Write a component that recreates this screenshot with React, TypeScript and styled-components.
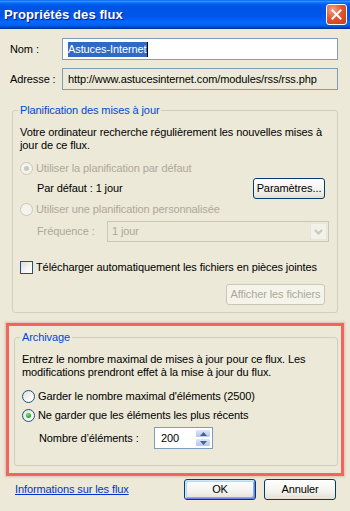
import React from 'react';
import styled, { createGlobalStyle } from 'styled-components';

const Global = createGlobalStyle`
  html, body {
    margin: 0;
    padding: 0;
    background: #ece9d8;
  }
  body {
    font-family: "Liberation Sans", Arial, sans-serif;
    font-size: 11px;
    line-height: 13px;
    letter-spacing: -0.1px;
    color: #000;
  }
`;

const Window = styled.div`
  width: 350px;
  height: 511px;
  display: flex;
  flex-direction: column;
  background: #ece9d8;
  overflow: hidden;
`;

const TitleBar = styled.div`
  height: 29px;
  flex: none;
  box-sizing: border-box;
  display: flex;
  align-items: center;
  justify-content: space-between;
  padding: 0 3px 1px 4px;
  background: linear-gradient(
    to bottom,
    #0058ee 0%,
    #3593ff 4%,
    #288eff 6%,
    #127dff 8%,
    #036ffc 10%,
    #0262ee 14%,
    #0057e5 20%,
    #0054e3 24%,
    #0055eb 56%,
    #005bf5 66%,
    #026afe 76%,
    #0062ef 86%,
    #0052d6 92%,
    #0040ab 96%,
    #003092 100%
  );
`;

const Title = styled.span`
  color: #fff;
  font-family: "Liberation Sans", Arial, sans-serif;
  font-weight: bold;
  font-size: 13px;
  letter-spacing: 0.1px;
  text-shadow: 1px 1px 0 #0a1e80;
`;

const CloseButton = styled.div`
  width: 21px;
  height: 21px;
  box-sizing: border-box;
  border: 1px solid #fff;
  border-radius: 3px;
  background: radial-gradient(circle at 30% 25%, #f4a38a 0%, #e2572f 45%, #c8391a 100%);
  display: flex;
  align-items: center;
  justify-content: center;
`;

const Content = styled.div`
  display: flex;
  flex-direction: column;
  padding: 9px 12px 0 10px;
`;

const FieldRow = styled.div<{ $top?: number }>`
  display: flex;
  align-items: center;
  height: 22px;
  margin-top: ${p => p.$top ?? 0}px;
`;

const FieldLabel = styled.div`
  width: 52px;
  flex: none;
`;

const TextBox = styled.div<{ $readOnly?: boolean }>`
  width: 276px;
  height: 22px;
  box-sizing: border-box;
  border: 1px solid #7f9db9;
  background: ${p => (p.$readOnly ? '#ece9d8' : '#fff')};
  display: flex;
  align-items: center;
  padding: 0 5px;
  white-space: nowrap;
`;

const Selection = styled.span`
  background: #316ac5;
  color: #fff;
  padding: 1px 0;
`;

const TextCaret = styled.span`
  width: 1px;
  height: 15px;
  background: #000;
`;

const Group = styled.fieldset<{ $top?: number; $bottom?: number }>`
  margin: ${p => p.$top ?? 0}px 0 0 2px;
  padding: 9px 8px ${p => p.$bottom ?? 7}px 7px;
  border: 1px solid #d0d0bf;
  border-radius: 3px;
  min-width: 0;
  display: flex;
  flex-direction: column;
`;

const Legend = styled.legend`
  color: #0046d5;
  padding: 0 2px;
  margin-left: -2px;
  line-height: 13px;
`;

const Paragraph = styled.div`
  white-space: nowrap;
`;

const Option = styled.div<{ $top?: number }>`
  display: flex;
  align-items: center;
  gap: 3px;
  height: 14px;
  margin-top: ${p => p.$top ?? 0}px;
`;

const OptionText = styled.span<{ $disabled?: boolean }>`
  color: ${p => (p.$disabled ? '#aca899' : '#000')};
  white-space: nowrap;
`;

const RadioCircle = styled.span<{ $checked?: boolean; $disabled?: boolean }>`
  width: 13px;
  height: 13px;
  flex: none;
  box-sizing: border-box;
  border-radius: 50%;
  border: 1px solid ${p => (p.$disabled ? '#cac8bb' : '#1c5180')};
  background: ${p =>
    p.$disabled ? '#f4f3ee' : 'linear-gradient(135deg, #dcdcd7 0%, #f6f6f4 60%, #fff 100%)'};
  display: flex;
  align-items: center;
  justify-content: center;

  &::after {
    content: '';
    display: ${p => (p.$checked ? 'block' : 'none')};
    width: 5px;
    height: 5px;
    border-radius: 50%;
    background: ${p =>
      p.$disabled ? '#cac8bb' : 'radial-gradient(circle at 40% 35%, #7ee27e 0%, #21a121 70%)'};
  }
`;

const CheckBox = styled.span`
  width: 13px;
  height: 13px;
  flex: none;
  box-sizing: border-box;
  border: 1px solid #1c5180;
  background: linear-gradient(135deg, #dcdcd7 0%, #f6f6f4 60%, #fff 100%);
`;

const SubRow = styled.div<{ $top?: number; $h?: number }>`
  display: flex;
  align-items: center;
  height: ${p => p.$h ?? 20}px;
  padding-left: 17px;
  margin-top: ${p => p.$top ?? 0}px;
`;

const SubLabel = styled.span<{ $w?: number; $disabled?: boolean }>`
  width: ${p => (p.$w ? `${p.$w}px` : 'auto')};
  flex: ${p => (p.$w ? 'none' : '1')};
  color: ${p => (p.$disabled ? '#aca899' : '#000')};
  white-space: nowrap;
`;

const Button = styled.div<{ $w: number; $default?: boolean; $disabled?: boolean; $right?: number }>`
  width: ${p => p.$w}px;
  height: 21px;
  box-sizing: border-box;
  flex: none;
  margin-right: ${p => p.$right ?? 0}px;
  border: 1px solid ${p => (p.$disabled ? '#c9c7ba' : '#003c74')};
  border-radius: 3px;
  background: ${p =>
    p.$disabled ? '#f5f4ea' : 'linear-gradient(to bottom, #fff 0%, #f3f2ec 60%, #e3e0d6 100%)'};
  box-shadow: ${p =>
    p.$default
      ? 'inset 1px 1px 0 #cee7ff, inset -1px -1px 0 #6982ee, inset 2px 2px 0 #bcd4f6, inset -2px -2px 0 #89adf3'
      : 'none'};
  color: ${p => (p.$disabled ? '#aca899' : '#000')};
  display: flex;
  align-items: center;
  justify-content: center;
  white-space: nowrap;
`;

const ButtonRow = styled.div<{ $top?: number }>`
  display: flex;
  justify-content: flex-end;
  margin-top: ${p => p.$top ?? 0}px;
`;

const Select = styled.div`
  width: 222px;
  height: 21px;
  box-sizing: border-box;
  border: 1px solid #c9c7ba;
  background: #ece9d8;
  display: flex;
  align-items: center;
  color: #aca899;
  padding: 1px 1px 1px 4px;
`;

const SelectText = styled.span`
  flex: 1;
`;

const SelectArrow = styled.div`
  width: 17px;
  height: 17px;
  box-sizing: border-box;
  border: 1px solid #e8e6dc;
  background: #f2f1ea;
  display: flex;
  align-items: center;
  justify-content: center;
`;

const Highlight = styled.div`
  margin: 10px -6px 0 -4px;
  padding: 5px 3px 7px 3px;
  border: 3px solid #f2655f;
  box-shadow: 0 0 2px 1px rgba(190, 110, 100, 0.35);
`;

const SpinBox = styled.div`
  width: 59px;
  height: 22px;
  box-sizing: border-box;
  border: 1px solid #7f9db9;
  background: #fff;
  display: flex;
  align-items: stretch;
  padding: 1px;
`;

const SpinValue = styled.span`
  flex: 1;
  display: flex;
  align-items: center;
  padding-left: 5px;
`;

const SpinButtons = styled.div`
  width: 16px;
  display: flex;
  flex-direction: column;
`;

const SpinButton = styled.div`
  flex: 1;
  border: 1px solid #fff;
  border-radius: 2px;
  background: linear-gradient(to bottom, #dfe8fd 0%, #c1d2f9 60%, #b4c7f5 100%);
  display: flex;
  align-items: center;
  justify-content: center;
`;

const Footer = styled.div`
  display: flex;
  align-items: center;
  justify-content: space-between;
  margin: 3px 2px 0 5px;
`;

const InfoLink = styled.a`
  color: #0033cc;
  text-decoration: underline;
  cursor: pointer;
`;

const FooterButtons = styled.div`
  display: flex;
  gap: 8px;
`;

const Radio = ({ checked, disabled }: { checked?: boolean; disabled?: boolean }) => (
  <RadioCircle $checked={checked} $disabled={disabled} />
);

const Caret = ({ up }: { up?: boolean }) => (
  <svg width="7" height="4" viewBox="0 0 7 4">
    <polygon points={up ? '0,4 3.5,0 7,4' : '0,0 3.5,4 7,0'} fill="#4d6185" />
  </svg>
);

export default function App() {
  return (
    <>
      <Global />
      <Window>
        <TitleBar>
          <Title>Propriétés des flux</Title>
          <CloseButton>
            <svg width="11" height="11" viewBox="0 0 11 11">
              <path d="M1.5 1.5 L9.5 9.5 M9.5 1.5 L1.5 9.5" stroke="#fff" strokeWidth="2" strokeLinecap="square" />
            </svg>
          </CloseButton>
        </TitleBar>

        <Content>
          <FieldRow>
            <FieldLabel>Nom :</FieldLabel>
            <TextBox>
              <Selection>Astuces-Internet</Selection>
              <TextCaret />
            </TextBox>
          </FieldRow>
          <FieldRow $top={8}>
            <FieldLabel>Adresse :</FieldLabel>
            <TextBox $readOnly>http://www.astucesinternet.com/modules/rss/rss.php</TextBox>
          </FieldRow>

          <Group $top={14}>
            <Legend>Planification des mises à jour</Legend>
            <Paragraph>
              Votre ordinateur recherche régulièrement les nouvelles mises à
              <br />
              jour de ce flux.
            </Paragraph>
            <Option $top={9}>
              <Radio checked disabled />
              <OptionText $disabled>Utiliser la planification par défaut</OptionText>
            </Option>
            <SubRow $top={3}>
              <SubLabel>Par défaut : 1 jour</SubLabel>
              <Button $w={72} $right={4}>
                Paramètres...
              </Button>
            </SubRow>
            <Option $top={4}>
              <Radio disabled />
              <OptionText $disabled>Utiliser une planification personnalisée</OptionText>
            </Option>
            <SubRow $top={5} $h={21}>
              <SubLabel $w={70} $disabled>
                Fréquence :
              </SubLabel>
              <Select>
                <SelectText>1 jour</SelectText>
                <SelectArrow>
                  <svg width="9" height="6" viewBox="0 0 9 6">
                    <path d="M1 1 L4.5 4.5 L8 1" stroke="#c9c7ba" strokeWidth="2" fill="none" />
                  </svg>
                </SelectArrow>
              </Select>
            </SubRow>
            <Option $top={18}>
              <CheckBox />
              <OptionText>Télécharger automatiquement les fichiers en pièces jointes</OptionText>
            </Option>
            <ButtonRow $top={10}>
              <Button $w={99} $right={4} $disabled>
                Afficher les fichiers
              </Button>
            </ButtonRow>
          </Group>

          <Highlight>
            <Group $bottom={16}>
              <Legend>Archivage</Legend>
              <Paragraph>
                Entrez le nombre maximal de mises à jour pour ce flux. Les
                <br />
                modifications prendront effet à la mise à jour du flux.
              </Paragraph>
              <Option $top={10}>
                <Radio />
                <OptionText>Garder le nombre maximal d'éléments (2500)</OptionText>
              </Option>
              <Option $top={5}>
                <Radio checked />
                <OptionText>Ne garder que les éléments les plus récents</OptionText>
              </Option>
              <SubRow $top={5} $h={22}>
                <SubLabel $w={115}>Nombre d’éléments :</SubLabel>
                <SpinBox>
                  <SpinValue>200</SpinValue>
                  <SpinButtons>
                    <SpinButton>
                      <Caret up />
                    </SpinButton>
                    <SpinButton>
                      <Caret />
                    </SpinButton>
                  </SpinButtons>
                </SpinBox>
              </SubRow>
            </Group>
          </Highlight>

          <Footer>
            <InfoLink>Informations sur les flux</InfoLink>
            <FooterButtons>
              <Button $w={72} $default>
                OK
              </Button>
              <Button $w={72}>Annuler</Button>
            </FooterButtons>
          </Footer>
        </Content>
      </Window>
    </>
  );
}
